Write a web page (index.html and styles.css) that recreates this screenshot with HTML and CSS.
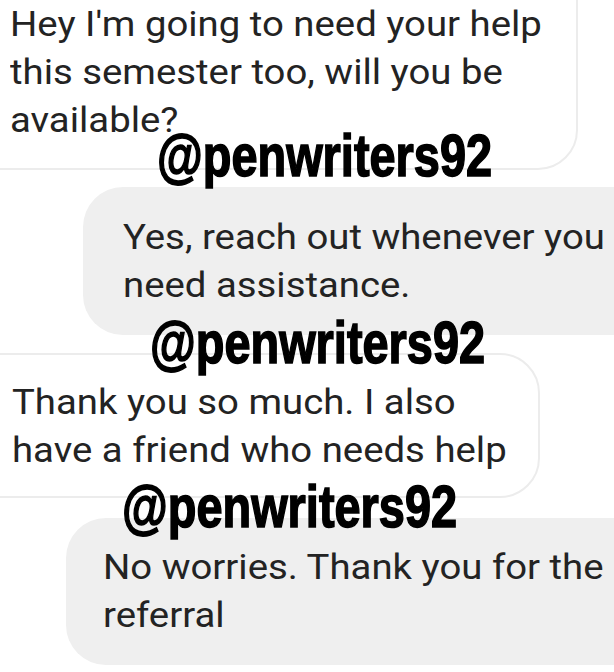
FILE: index.html
```html
<!DOCTYPE html>
<html lang="en">
<head>
<meta charset="utf-8">
<title>Chat</title>
<link rel="stylesheet" href="styles.css">
</head>
<body>
<main class="chat">
  <div class="bubble incoming first">
    <p class="msg">Hey I'm going to need your help<br>this semester too, will you be<br>available?</p>
  </div>
  <div class="bubble outgoing second">
    <p class="msg">Yes, reach out whenever you<br>need assistance.</p>
  </div>
  <div class="bubble incoming third">
    <p class="msg">Thank you so much. I also<br>have a friend who needs help</p>
  </div>
  <div class="bubble outgoing fourth">
    <p class="msg">No worries. Thank you for the<br>referral</p>
  </div>

  <span class="mark mark-1">@penwriters92</span>
  <span class="mark mark-2">@penwriters92</span>
  <span class="mark mark-3">@penwriters92</span>
</main>
</body>
</html>
```
FILE: styles.css
```css
html, body {
  margin: 0;
  padding: 0;
  background: #ffffff;
  overflow: hidden;
}

.chat {
  position: relative;
  width: 614px;
  height: 672px;
  overflow: hidden;
  display: flex;
  flex-direction: column;
  align-items: flex-start;
  font-family: Roboto, "Liberation Sans", sans-serif;
  color: #232323;
}

.bubble {
  box-sizing: border-box;
  border-radius: 40px;
  flex-shrink: 0;
}

.msg {
  margin: 0;
  font-size: 35px;
  line-height: 48px;
  white-space: nowrap;
  transform: scaleX(1.095);
  transform-origin: 0 0;
}

.incoming {
  background: #ffffff;
  border: 2px solid #ececec;
}

.outgoing {
  background: #efefef;
}

.first {
  margin-top: -40px;
  margin-left: -40px;
  width: 618px;
  padding: 39px 20px 23px 48px;
}

.second {
  margin-top: 17px;
  margin-left: 83px;
  width: 580px;
  padding: 27px 0 25px 40px;
}

.third {
  margin-top: 18px;
  margin-left: -40px;
  width: 580px;
  padding: 24px 20px 21px 50px;
}

.fourth {
  margin-top: 20px;
  margin-left: 66px;
  width: 600px;
  padding: 26px 0 25px 37px;
}

.mark {
  position: absolute;
  font-family: "Liberation Sans", Arial, sans-serif;
  font-weight: 700;
  font-size: 59px;
  line-height: 59px;
  color: #000000;
  -webkit-text-stroke: 1.6px #000000;
  white-space: nowrap;
  transform: scaleX(0.795);
  transform-origin: 0 0;
}

.mark-1 { left: 157px; top: 127px; }
.mark-2 { left: 150px; top: 314px; }
.mark-3 { left: 122px; top: 478px; }
```
